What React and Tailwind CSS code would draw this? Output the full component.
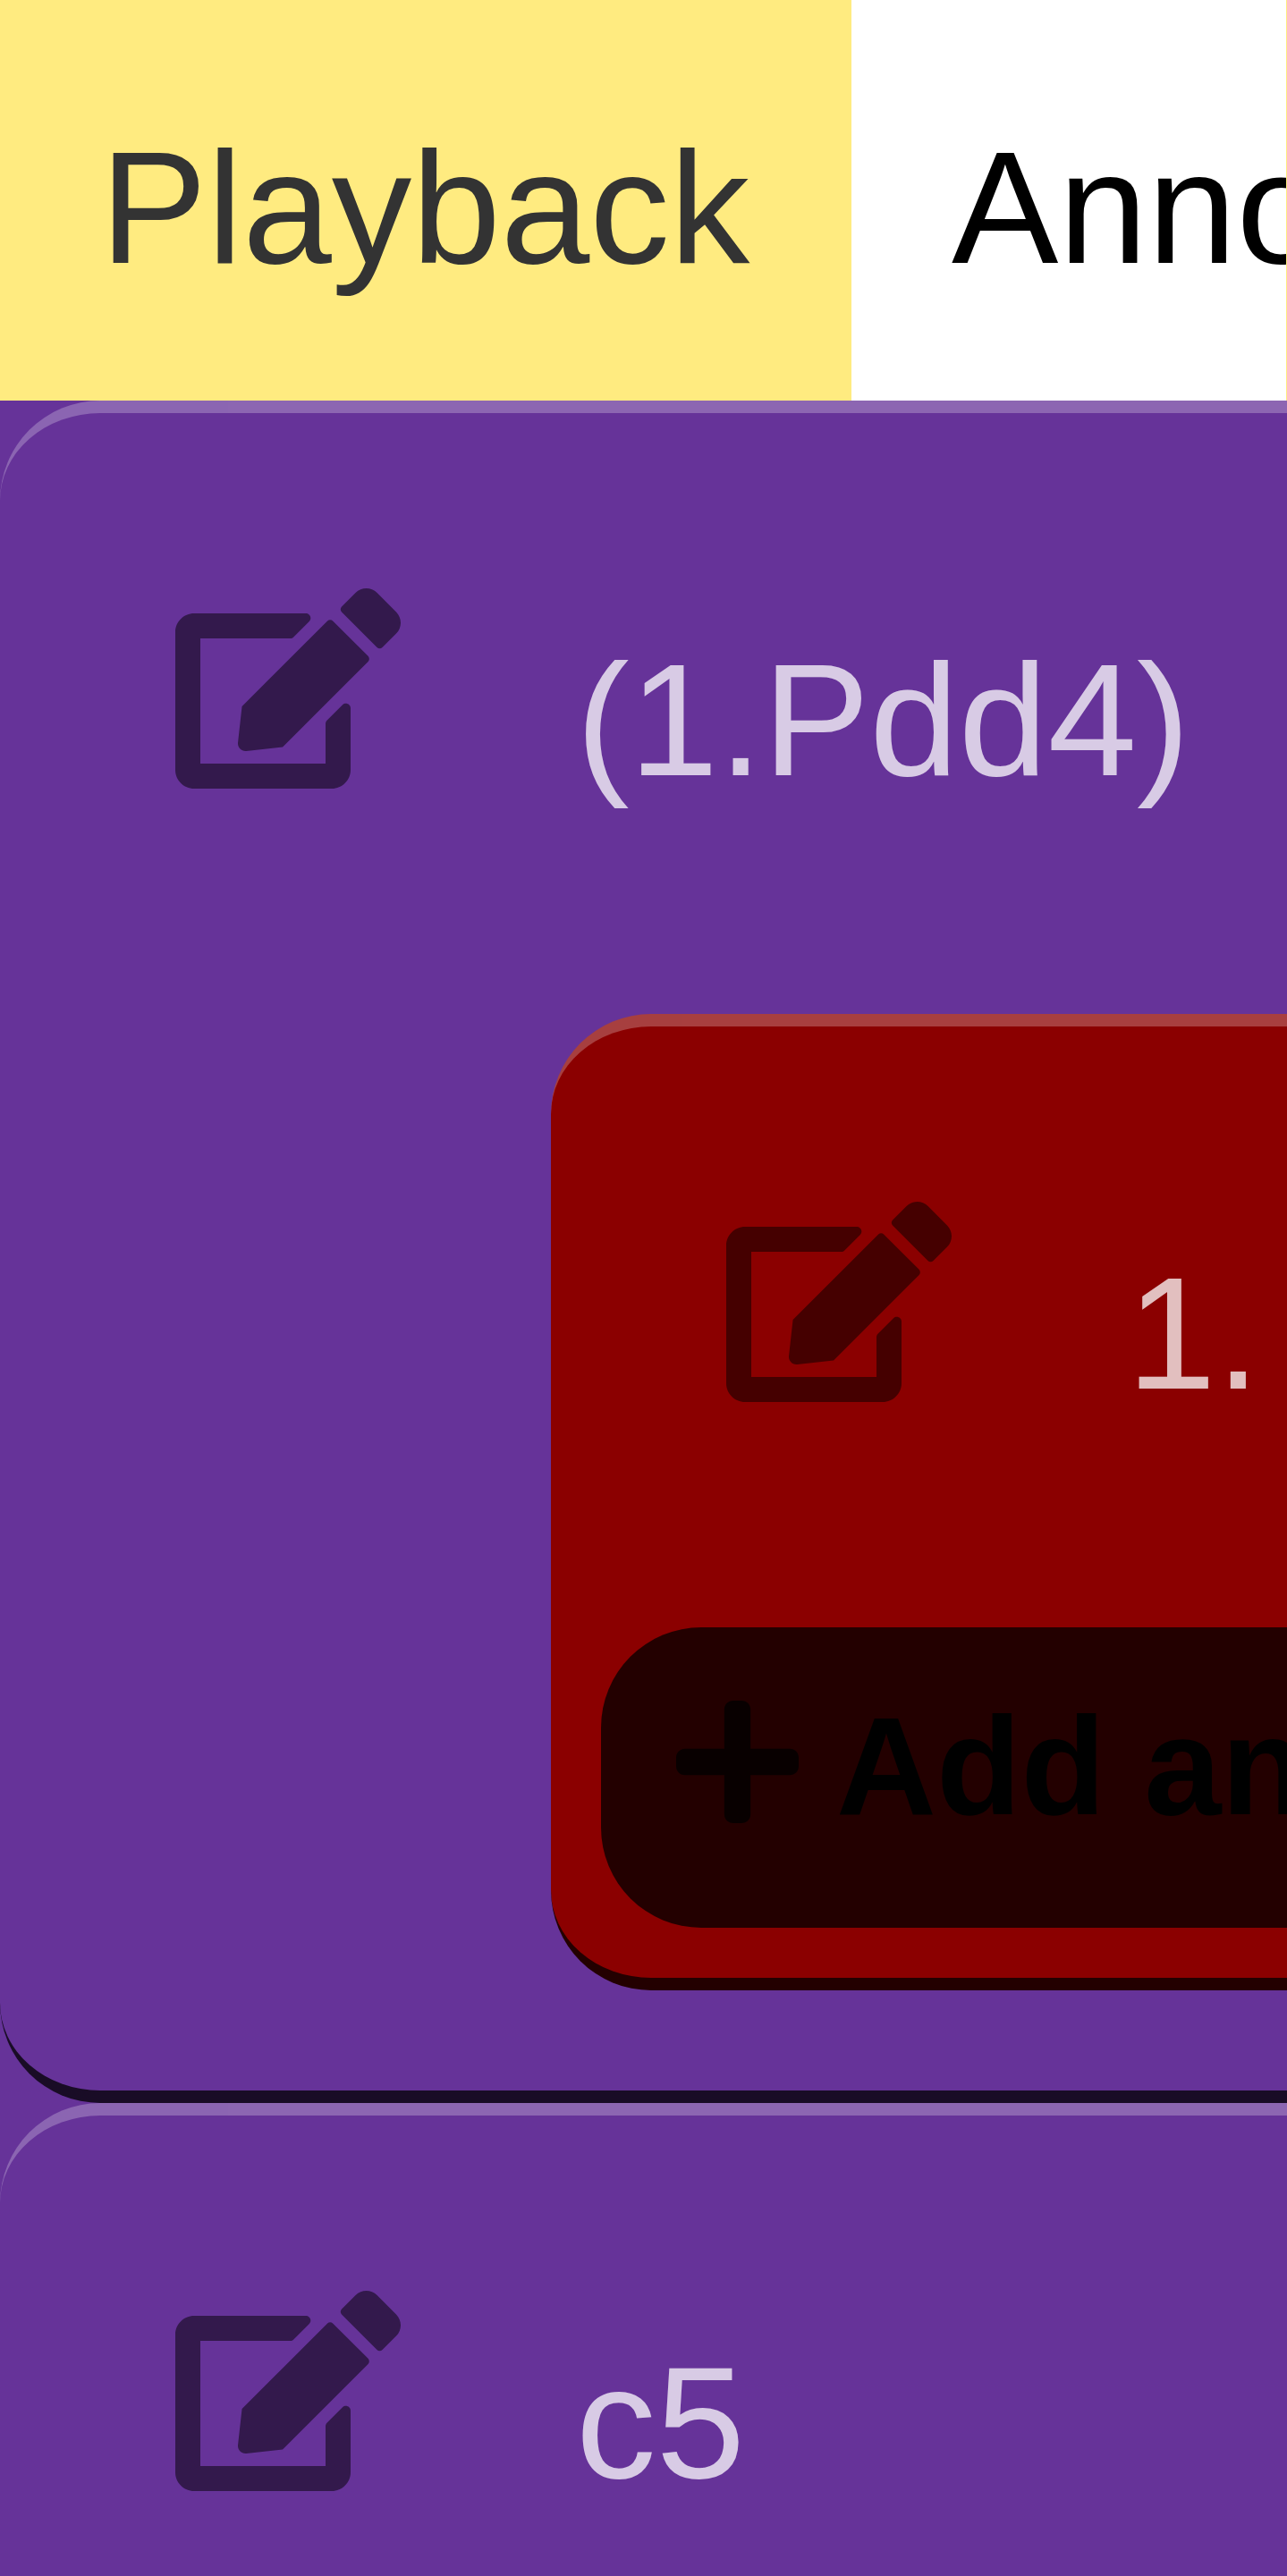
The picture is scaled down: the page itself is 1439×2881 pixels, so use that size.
import React from "react";
import { FaEdit, FaPlus } from "react-icons/fa";

const bevel =
  "rounded-[112px] border-t-[14px] border-b-[14px] border-t-white/25 border-b-black/75";

function MoveRow({ label }) {
  return (
    <div className="flex h-[672px] items-start pl-[196px] pt-[196px]">
      <button type="button" aria-label={"Edit " + label} className="shrink-0 text-black/50">
        <FaEdit className="h-[224px] w-[252px]" />
      </button>
      <span className="ml-[196px] mt-[44px] whitespace-nowrap text-[179px] leading-[206px] text-white/75">
        {label}
      </span>
    </div>
  );
}

export default function App() {
  return (
    <main className="h-screen overflow-hidden bg-[#663399] font-['Liberation_Sans',Arial,sans-serif]">
      <nav className="flex h-[448px] overflow-hidden border-r border-[#ffeb80] bg-white text-[179px] leading-[206px]">
        <button
          type="button"
          className="min-w-[952px] shrink-0 bg-[#ffeb80] px-[112px] pt-[16px] text-left text-[#333333]"
        >
          Playback
        </button>
        <button type="button" className="shrink-0 px-[112px] pt-[16px] text-black">
          Annotations
        </button>
      </nav>
      <div className="flex w-max min-w-full flex-col">
        <section className={"bg-[#663399] pb-[112px] " + bevel}>
          <MoveRow label="(1.Pdd4)" />
          <div className={"ml-[616px] bg-[#8b0000] pb-[56px] " + bevel}>
            <MoveRow label="1." />
            <button
              type="button"
              className="mx-[56px] flex h-[336px] items-center whitespace-nowrap rounded-[112px] bg-black/75 px-[84px] pb-[24px] text-[155px] leading-[180px] font-bold text-black"
            >
              <FaPlus className="mr-[42px] mb-[12px] h-[157px] w-[137px] text-black/75" />
              Add annotation
            </button>
          </div>
        </section>
        <section className={"bg-[#663399] " + bevel}>
          <MoveRow label="c5" />
        </section>
      </div>
    </main>
  );
}
